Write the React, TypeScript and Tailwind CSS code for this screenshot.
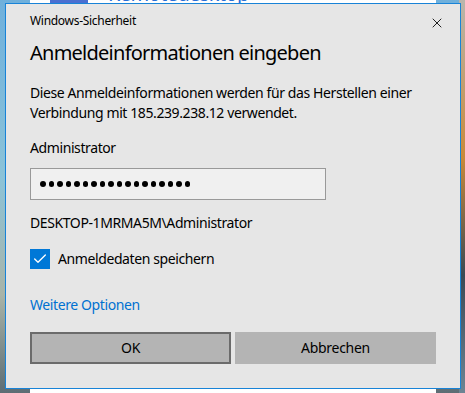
import { Check, X } from 'lucide-react';

const font = { fontFamily: '"Segoe UI", "Noto Sans", "Open Sans", sans-serif' };

export default function App() {
  const dots = Array.from({ length: 18 });

  return (
    <div
      className="relative w-[465px] h-[393px] overflow-hidden bg-[linear-gradient(180deg,#6fb0dc_0%,#8cc3d8_45%,#a9b4a8_75%,#5d6d74_100%)]"
      style={font}
    >
      {/* right edge of the wallpaper */}
      <div className="absolute right-0 top-0 w-[6px] h-full bg-[linear-gradient(180deg,#b8b6ad_0%,#c98a3a_40%,#3b4a55_70%,#6d8594_100%)]" />

      {/* remote desktop window behind */}
      <div className="absolute left-[30px] top-0 w-[406px] h-full bg-white">
        <div className="absolute left-[20px] top-0 w-[38px] h-[3px] bg-[#4a6fd1]" />
        <div className="absolute left-[78px] top-0 text-[#2a6fd6] text-[20px] leading-none tracking-[-0.6px] -translate-y-[16px]">
          Remotedesktop
        </div>
      </div>

      {/* dialog */}
      <div className="relative ml-[5px] mt-[3px] w-[456px] h-[386px] bg-[#e6e6e6] border border-[#1883d7] text-black">
        <div className="flex justify-between items-start pl-6 pr-[15px] pt-[8px]">
          <span className="text-[12px] leading-[18px] tracking-[-0.3px]">Windows-Sicherheit</span>
          <X className="w-[16px] h-[16px] mt-[3px]" strokeWidth={1.3} />
        </div>

        <div className="pl-6 pr-6 text-[14px] leading-[20px] tracking-[-0.4px]">
          <h1 className="mt-[9px] text-[20px] leading-[26px] font-normal tracking-[-0.75px]">Anmeldeinformationen eingeben</h1>

          <p className="mt-[17px] w-[400px]">
            Diese Anmeldeinformationen werden für das Herstellen einer Verbindung mit 185.239.238.12 verwendet.
          </p>

          <div className="mt-[15px]">Administrator</div>

          <div className="mt-[10px] w-[296px] h-[32px] bg-[#f0f0f0] border border-[#999999] flex items-center pl-[9px] gap-[3px]">
            {dots.map((_, i) => (
              <span key={i} className="w-[5.5px] h-[5.5px] rounded-full bg-black" />
            ))}
          </div>

          <div className="mt-[13px]">DESKTOP-1MRMA5M\Administrator</div>

          <label className="mt-[16px] flex items-center gap-2">
            <span className="w-[20px] h-[20px] bg-[#0078d7] flex items-center justify-center">
              <Check className="w-[16px] h-[16px] text-white" strokeWidth={2} />
            </span>
            <span>Anmeldedaten speichern</span>
          </label>

          <div className="mt-[26px] text-[#0071d1]">Weitere Optionen</div>

          <div className="mt-[17px] flex gap-[4px]">
            <button className="w-[201px] h-[32px] bg-[#b4b4b4] border-2 border-[#6b6b6b] tracking-[-0.3px]">OK</button>
            <button className="w-[201px] h-[32px] bg-[#b4b4b4] tracking-[-0.3px]">Abbrechen</button>
          </div>
        </div>
      </div>
    </div>
  );
}
